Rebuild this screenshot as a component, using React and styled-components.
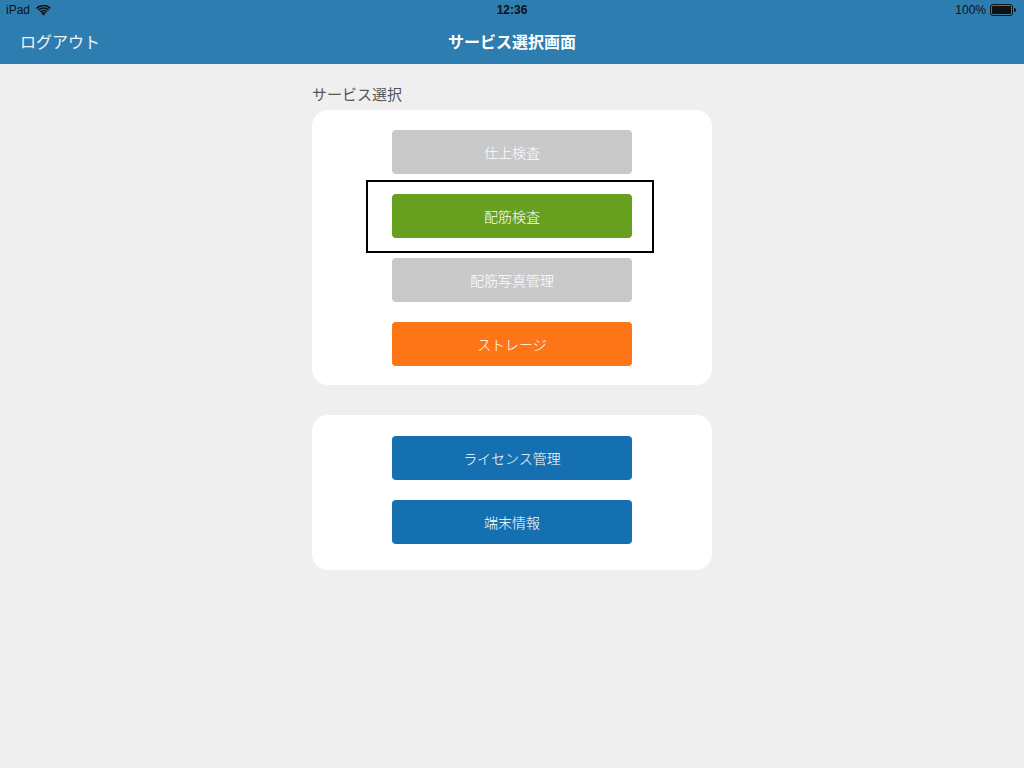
import React from 'react';
import styled, { createGlobalStyle } from 'styled-components';

const GlobalStyle = createGlobalStyle`
  html, body {
    margin: 0;
    padding: 0;
    background: #efefef;
    font-family: "Noto Sans CJK JP", "Noto Sans", sans-serif;
  }
`;

const Page = styled.div`
  width: 1024px;
  height: 768px;
  background: #efefef;
  display: flex;
  flex-direction: column;
`;

const Header = styled.header`
  background: #2e7db0;
  height: 64px;
  display: flex;
  flex-direction: column;
`;

const StatusBar = styled.div`
  height: 20px;
  display: grid;
  grid-template-columns: 1fr auto 1fr;
  align-items: center;
  padding: 0 6px;
  font-family: "Liberation Sans", "Noto Sans", sans-serif;
  font-size: 12px;
  color: #111;
`;

const StatusLeft = styled.div`
  display: flex;
  align-items: center;
  gap: 6px;
`;

const StatusRight = styled.div`
  display: flex;
  align-items: center;
  justify-content: flex-end;
  gap: 4px;
  padding-right: 2px;
`;

const Clock = styled.div`
  font-weight: bold;
  font-size: 12px;
`;

const NavBar = styled.div`
  flex: 1;
  display: grid;
  grid-template-columns: 1fr auto 1fr;
  align-items: center;
  padding: 0 20px 2px;
  color: #fff;
`;

const NavButton = styled.div`
  font-size: 16px;
  color: #eef4f9;
`;

const NavTitle = styled.div`
  font-size: 16px;
  font-weight: bold;
`;

const Main = styled.main`
  width: 400px;
  margin: 0 auto;
  padding-top: 20px;
  display: flex;
  flex-direction: column;
`;

const SectionLabel = styled.div`
  font-size: 15px;
  color: #555;
  line-height: 20px;
  margin-bottom: 6px;
`;

const Card = styled.div`
  background: #fff;
  border-radius: 16px;
  padding: ${p => p.$pad || '20px 0 19px'};
  display: flex;
  flex-direction: column;
  align-items: center;
  gap: 20px;
  margin-bottom: 30px;
`;

const ButtonWrap = styled.div`
  position: relative;
`;

const Focus = styled.div`
  position: absolute;
  left: -26px;
  right: -22px;
  top: -14px;
  bottom: -15px;
  border: 2px solid #000;
  pointer-events: none;
`;

const Button = styled.button`
  width: 240px;
  height: 44px;
  border: none;
  border-radius: 4px;
  background: ${p => p.$bg};
  color: #fff;
  font-family: "Noto Sans CJK JP", "Noto Sans", sans-serif;
  font-size: 14px;
  font-weight: 300;
  display: flex;
  align-items: center;
  justify-content: center;
  padding: 0;
  cursor: pointer;
`;

const Wifi = () => (
  <svg width="15" height="11" viewBox="0 0 15 11">
    <path d="M7.5 10.5 L5.2 8 A3.3 3.3 0 0 1 9.8 8 Z" fill="#111" />
    <path d="M3.6 6.4 A5.6 5.6 0 0 1 11.4 6.4 L10.3 7.5 A4 4 0 0 0 4.7 7.5 Z" fill="#111" />
    <path d="M1.8 4.6 A8.2 8.2 0 0 1 13.2 4.6 L12.1 5.7 A6.6 6.6 0 0 0 2.9 5.7 Z" fill="#111" />
    <path d="M0 2.8 A10.7 10.7 0 0 1 15 2.8 L13.9 3.9 A9.2 9.2 0 0 0 1.1 3.9 Z" fill="#111" />
  </svg>
);

const Battery = () => (
  <svg width="26" height="12" viewBox="0 0 26 12">
    <rect x="0.5" y="0.5" width="22" height="11" rx="2.5" fill="none" stroke="#111" />
    <rect x="2" y="2" width="19" height="8" rx="1.2" fill="#111" />
    <path d="M24 4 v4 a1.5 1.5 0 0 0 0 -4 z" fill="#111" />
  </svg>
);

const top = [
  { label: '仕上検査', bg: '#c9c9c9' },
  { label: '配筋検査', bg: '#679f1f', focus: true },
  { label: '配筋写真管理', bg: '#c9c9c9' },
  { label: 'ストレージ', bg: '#fd7516' },
];

const bottom = [
  { label: 'ライセンス管理', bg: '#1470b0' },
  { label: '端末情報', bg: '#1470b0' },
];

export default function App() {
  return (
    <>
      <GlobalStyle />
      <Page>
        <Header>
          <StatusBar>
            <StatusLeft>
              <span>iPad</span>
              <Wifi />
            </StatusLeft>
            <Clock>12:36</Clock>
            <StatusRight>
              <span>100%</span>
              <Battery />
            </StatusRight>
          </StatusBar>
          <NavBar>
            <NavButton>ログアウト</NavButton>
            <NavTitle>サービス選択画面</NavTitle>
            <div />
          </NavBar>
        </Header>
        <Main>
          <SectionLabel>サービス選択</SectionLabel>
          <Card>
            {top.map(b => (
              <ButtonWrap key={b.label}>
                <Button $bg={b.bg}>{b.label}</Button>
                {b.focus && <Focus />}
              </ButtonWrap>
            ))}
          </Card>
          <Card $pad="21px 0 26px">
            {bottom.map(b => (
              <Button key={b.label} $bg={b.bg}>{b.label}</Button>
            ))}
          </Card>
        </Main>
      </Page>
    </>
  );
}
